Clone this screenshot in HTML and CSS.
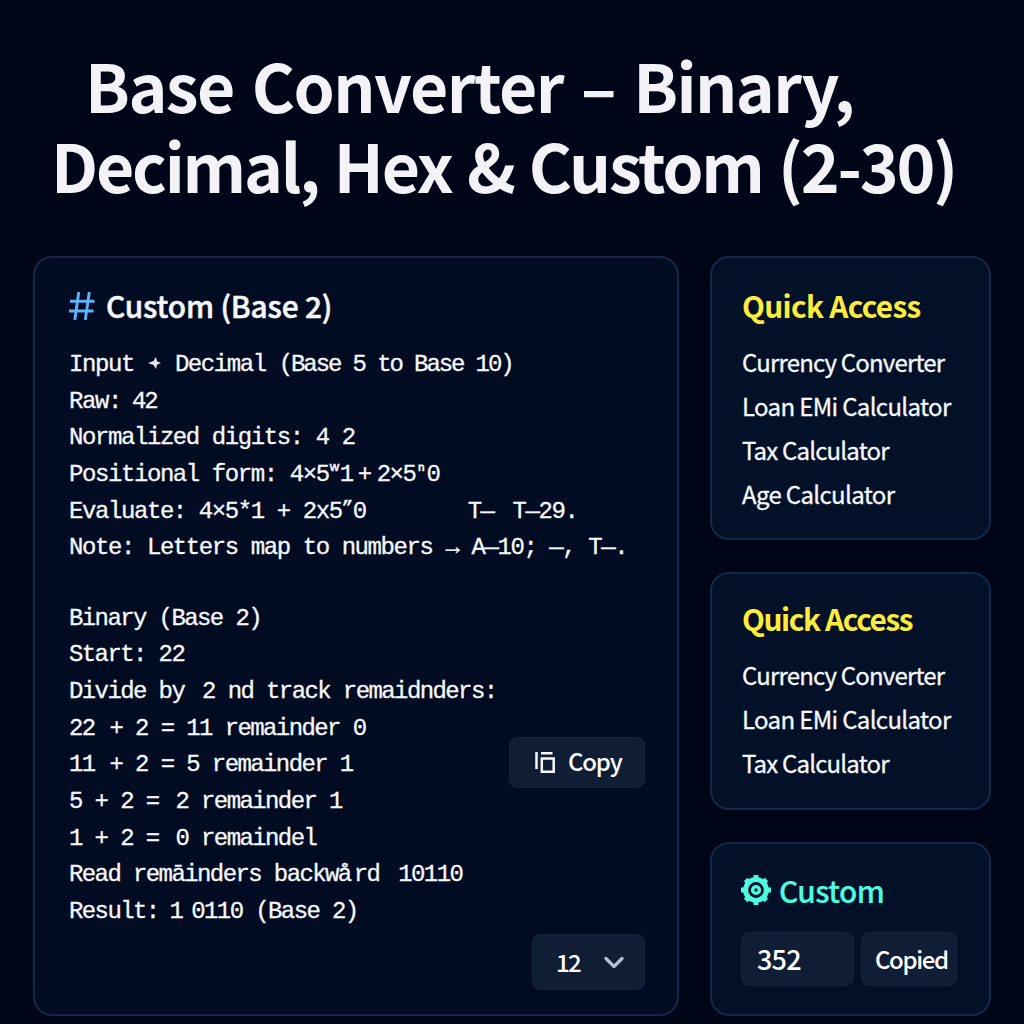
FILE: index.html
```html
<!DOCTYPE html>
<html lang="en">
<head><meta charset="utf-8"><title>Base Converter</title><link rel="stylesheet" href="styles.css"></head>
<body>
<h1 class="title"><span class="line t1">Base Converter – Binary,</span><span class="line t2">Decimal, Hex &amp; Custom (2-30)</span></h1>
<div class="layout">
<main class="card main">
<h2 class="heading"><svg class="hash" viewBox="0 0 26 30"><path d="M9.8 1 5.8 29M20.3 1 16.3 29M1 10.2H25.5M0 20H24.5"/></svg><span class="base">Custom (Base 2)</span></h2>
<div class="steps">
<div>Input <svg class="star" viewBox="0 0 13 12"><path d="M0 6 5.5 4 8 0 9 4.3 13 6 9 7.7 8 12 5.5 8Z"/></svg> Decimal <span class="b1">(Base 5 to Base 10)</span></div>
<div>Raw: <span class="n1">42</span></div>
<div>Normalized digits: 4 2</div>
<div>Positional form: 4×5<sup>ʷ</sup>1<span class="p1">+</span><span class="p2">2×5</span><sup>ⁿ</sup>0</div>
<div>Evaluate: 4×5*1 <span class="e1">+</span> 2x5<sup>”</sup>0<span class="e2">T—</span><span class="e3">T—29.</span></div>
<div>Note: Letters map to numbers <span class="arr">→</span> A—10; —, T—.</div>
</div>
<div class="row">
<div class="steps tight">
<div>Binary (Base 2)</div>
<div>Start: 22</div>
<div>Divide by <span class="d1">2</span> nd track remaidnders:</div>
<div>22 <span class="q1">+</span> 2 = 11 remainder 0</div>
<div>11 <span class="q1">+</span> 2 = 5 remainder 1</div>
<div>5 + 2 = <span class="q2">2 remainder 1</span></div>
<div>1 + 2 = <span class="q2">0 remaindel</span></div>
<div>Read remāinders backwå<span class="r1">rd</span><span class="r2">10110</span></div>
<div>Result: <span class="z1">1</span><span class="z2">0110 (Base 2)</span></div>
</div>
<button class="btn copy"><svg class="copy-icon" viewBox="0 0 21 23"><path d="M1.5 1V18M6 2.2H17.5M6.8 7.5H18.7V20.7H6.8Z"/></svg><span>Copy</span></button>
</div>
<div class="foot"><button class="btn select"><span>12</span><svg class="chev" viewBox="0 0 20 14"><path d="M2 2.5 10 10.5 18 2.5"/></svg></button></div>
</main>
<aside class="side">
<section class="card c1"><h2 class="heading yellow">Quick Access</h2>
<ul class="links"><li class="cur">Currency Converter</li><li>Loan EMi Calculator</li><li class="tax">Tax Calculator</li><li>Age Calculator</li></ul></section>
<section class="card c2"><h2 class="heading yellow">Quick Access</h2>
<ul class="links"><li class="cur">Currency Converter</li><li>Loan EMi Calculator</li><li class="tax">Tax Calculator</li></ul></section>
<section class="card c3"><h2 class="heading teal"><svg class="gear" viewBox="-15 -15 30 30"><circle r="10.4"/><circle class="dot" r="3.4"/><path d="M0-12V-15M0 12V15M-12 0H-15M12 0H15M8.5-8.5 10.4-10.4M-8.5-8.5-10.4-10.4M8.5 8.5 10.4 10.4M-8.5 8.5-10.4 10.4"/></svg><span>Custom</span></h2>
<div class="fields"><div class="btn value">352</div><div class="btn copied">Copied</div></div></section>
</aside>
</div>
</body></html>
```
FILE: styles.css
```css
*{box-sizing:border-box}
body{margin:0;width:1024px;height:1024px;overflow:hidden;background:#000517;color:#f6f7fa;font-family:"Noto Sans CJK SC","Noto Sans",sans-serif}
.title{margin:0;padding:43.5px 0 0 0;height:256px;font-size:66px;font-weight:700;line-height:80.5px;color:#f2f2f7}
.line{display:block;width:max-content;white-space:nowrap}
.t1{margin-left:85px;letter-spacing:-1.55px;word-spacing:4.5px}
.t2{margin-left:51px;letter-spacing:-2.2px;word-spacing:2.5px}
.layout{display:grid;grid-template-columns:646px 281px;column-gap:31px;padding-left:33px}
.card{border:2px solid #142847;border-radius:19px;background:#021128}
.main{height:760px;padding:27px 32px 0 34px;background:#010b21}
.side{display:flex;flex-direction:column;gap:32px}
.c1,.c2,.c3{padding:27px 30px 0}
.c1{height:284px}
.c2{height:238px;padding-top:24px}
.c3{height:174px;padding-top:26px;padding-left:29px}
.heading{display:flex;align-items:center;margin:0;height:40px;font-size:29.8px;font-weight:500;line-height:40px;white-space:nowrap;-webkit-text-stroke:.5px}
.base{letter-spacing:-.15px}
.hash{width:26px;height:30px;margin:1px 11px 0 0;fill:none;stroke:#5cb3fb;stroke-width:2.9}
.yellow{color:#ffeb3b;font-weight:700;letter-spacing:-.7px;-webkit-text-stroke:0}
.c2 .yellow{letter-spacing:-1.4px}
.teal{color:#4dfbe0;letter-spacing:-.6px;-webkit-text-stroke:.2px}
.gear{width:30px;height:30px;margin:0 8px 0 0;fill:none;stroke:#4dfbe0;stroke-width:5}
.gear .dot{stroke-width:3.4}
.steps{font:24px/36.65px "Liberation Mono",monospace;letter-spacing:-1.42px;-webkit-text-stroke:.3px}
.main>.steps{margin-top:22px}
.steps>div{height:36.65px;white-space:pre}
.steps span,.steps sup{display:inline-block}
.steps sup{font-size:19px;width:11px;line-height:1;vertical-align:5px;-webkit-text-stroke:.6px}
.tight{letter-spacing:-1.6px}
.star{width:13px;height:12px;vertical-align:2px;margin:0 1px 0 1px;fill:#e4e6ec}
.b1{letter-spacing:-2.1px}
.n1{margin-left:-2px;letter-spacing:-2px}
.p1{margin-left:5px}
.p2{margin-left:6px}
.e2{margin-left:102px}
.e3{margin-left:19px}
.d1{margin-left:5px}
.q1{margin-left:2px}
.q2{margin-left:4px}
.r1{margin-left:3px}
.r2{margin-left:19px}
.z1{margin-left:-2px}
.z2{margin-left:9px}
.row{display:flex;justify-content:space-between;margin-top:34px}
.btn{display:flex;align-items:center;border:1px solid #14243d;border-radius:8px;background:#0f1d35;color:#fff;font:500 24px/34px "Noto Sans CJK SC","Noto Sans",sans-serif;white-space:nowrap;padding:0}
.copy{width:136px;height:51px;margin-top:136px;padding:0 0 2px 25px;gap:12px;letter-spacing:-1.2px}
.copy-icon{width:21px;height:23px;margin-top:2px;fill:none;stroke:#f5f7fb;stroke-width:2.5}
.foot{display:flex;justify-content:flex-end;margin-top:3px}
.select{width:113px;height:56px;padding:0 20px 0 23px;justify-content:space-between;letter-spacing:-1.6px}
.chev{width:20px;height:14px;margin-top:3px;fill:none;stroke:#b4c0d6;stroke-width:3.2;stroke-linecap:round;stroke-linejoin:round}
.links{list-style:none;margin:15px 0 0;padding:0;font-size:24px;line-height:44px;font-weight:400;letter-spacing:-.65px;white-space:nowrap;-webkit-text-stroke:.3px}
.cur,.tax{letter-spacing:-.82px}
.fields{display:flex;gap:7px;margin-top:22px}
.value{width:113px;height:54px;padding-left:15px;font-size:27px;letter-spacing:-.8px}
.copied{width:96px;height:54px;padding-left:13px;letter-spacing:-1.4px}
```
